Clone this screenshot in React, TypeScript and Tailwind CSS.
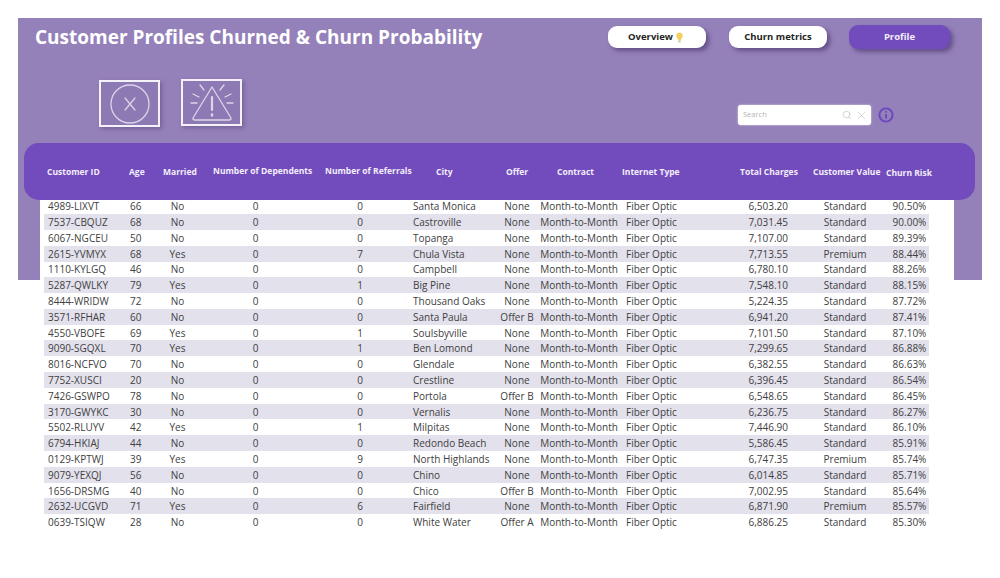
import { Search, X } from "lucide-react";

type Row = [string, number, string, number, number, string, string, string, string, string];

const rows: Row[] = [
  ["4989-LIXVT", 66, "No", 0, 0, "Santa Monica", "None", "6,503.20", "Standard", "90.50%"],
  ["7537-CBQUZ", 68, "No", 0, 0, "Castroville", "None", "7,031.45", "Standard", "90.00%"],
  ["6067-NGCEU", 50, "No", 0, 0, "Topanga", "None", "7,107.00", "Standard", "89.39%"],
  ["2615-YVMYX", 68, "Yes", 0, 7, "Chula Vista", "None", "7,713.55", "Premium", "88.44%"],
  ["1110-KYLGQ", 46, "No", 0, 0, "Campbell", "None", "6,780.10", "Standard", "88.26%"],
  ["5287-QWLKY", 79, "Yes", 0, 1, "Big Pine", "None", "7,548.10", "Standard", "88.15%"],
  ["8444-WRIDW", 72, "No", 0, 0, "Thousand Oaks", "None", "5,224.35", "Standard", "87.72%"],
  ["3571-RFHAR", 60, "No", 0, 0, "Santa Paula", "Offer B", "6,941.20", "Standard", "87.41%"],
  ["4550-VBOFE", 69, "Yes", 0, 1, "Soulsbyville", "None", "7,101.50", "Standard", "87.10%"],
  ["9090-SGQXL", 70, "Yes", 0, 1, "Ben Lomond", "None", "7,299.65", "Standard", "86.88%"],
  ["8016-NCFVO", 70, "No", 0, 0, "Glendale", "None", "6,382.55", "Standard", "86.63%"],
  ["7752-XUSCI", 20, "No", 0, 0, "Crestline", "None", "6,396.45", "Standard", "86.54%"],
  ["7426-GSWPO", 78, "No", 0, 0, "Portola", "Offer B", "6,548.65", "Standard", "86.45%"],
  ["3170-GWYKC", 30, "No", 0, 0, "Vernalis", "None", "6,236.75", "Standard", "86.27%"],
  ["5502-RLUYV", 42, "Yes", 0, 1, "Milpitas", "None", "7,446.90", "Standard", "86.10%"],
  ["6794-HKIAJ", 44, "No", 0, 0, "Redondo Beach", "None", "5,586.45", "Standard", "85.91%"],
  ["0129-KPTWJ", 39, "Yes", 0, 9, "North Highlands", "None", "6,747.35", "Premium", "85.74%"],
  ["9079-YEXQJ", 56, "No", 0, 0, "Chino", "None", "6,014.85", "Standard", "85.71%"],
  ["1656-DRSMG", 40, "No", 0, 0, "Chico", "Offer B", "7,002.95", "Standard", "85.64%"],
  ["2632-UCGVD", 71, "Yes", 0, 6, "Fairfield", "None", "6,871.90", "Premium", "85.57%"],
  ["0639-TSIQW", 28, "No", 0, 0, "White Water", "Offer A", "6,886.25", "Standard", "85.30%"],
];

const rowGrid = "grid grid-cols-[82px_38px_27px_129px_80px_97px_40px_84px_99px_80px_90px_39px] items-center w-[885px] h-[15.8px]";
const headGrid = "grid grid-cols-[82px_34px_50px_112px_111px_70px_51px_65px_118px_73px_73px_46px] items-center ml-[23px] pt-[1px] h-full";

export default function App() {
  return (
    <div className="w-[1000px] h-[578px] bg-white overflow-hidden pt-[18px] font-['Open_Sans',sans-serif]">
      {/* fondo morado con titulo, iconos y cabecera */}
      <div className="mx-[18px] h-[262px] bg-[#9581b9] pt-[7px] flex flex-col">
        <div className="flex items-center h-[24px] pl-[17px] pr-[32px]">
          <h1 className="text-[19px] font-bold text-white leading-none whitespace-nowrap">
            Customer Profiles Churned &amp; Churn Probability
          </h1>
          <button className="ml-auto w-[98px] h-[22px] rounded-[9px] bg-white text-[9.5px] font-bold text-[#252423] flex items-center justify-center gap-[2px] pr-[2px] shadow-[3px_3px_4px_rgba(60,40,100,0.55)]">
            Overview
            <svg width="9" height="11" viewBox="0 0 9 11">
              <path d="M4.5 0.5a3.4 3.4 0 0 0-2 6.1l0.6 1.5h2.8l0.6-1.5a3.4 3.4 0 0 0-2-6.1z" fill="#f5d060" />
              <rect x="3.3" y="8.4" width="2.4" height="1.8" fill="#c9b98a" />
            </svg>
          </button>
          <button className="ml-[23px] w-[98px] h-[22px] rounded-[9px] bg-white text-[9.5px] font-bold text-[#252423] shadow-[3px_3px_4px_rgba(60,40,100,0.55)]">
            Churn metrics
          </button>
          <button className="ml-[22px] w-[101px] h-[24px] rounded-[9px] bg-[#724bbd] text-[9.5px] font-bold text-[#f2eefa] shadow-[3px_3px_4px_rgba(60,40,100,0.55)]">
            Profile
          </button>
        </div>

        <div className="flex items-start mt-[30px] h-[48px] pl-[81px] pr-[88px]">
          <div className="mt-[1px] w-[61px] h-[47px] border-2 border-[#f4f2f8] bg-[#8d79b3] shadow-[2px_2px_4px_rgba(60,40,100,0.35)] flex items-center justify-center">
            <svg width="44" height="44" viewBox="0 0 44 44" fill="none" stroke="#ddd5ea" strokeLinecap="round">
              <circle cx="22" cy="22" r="19" strokeWidth="1.3" />
              <path d="M17 16 L27 28 M27 16 L17 28" strokeWidth="1.2" />
            </svg>
          </div>
          <div className="ml-[21px] w-[61px] h-[47px] border-2 border-[#f4f2f8] bg-[#8d79b3] shadow-[2px_2px_4px_rgba(60,40,100,0.35)] flex items-center justify-center">
            <svg width="44" height="42" viewBox="0 0 44 42" fill="none" stroke="#ddd5ea" strokeLinecap="round" strokeLinejoin="round">
              <path d="M22 5 L41 36 Q41.5 38 39 38 H5 Q2.5 38 3 36 Z" strokeWidth="1.3" />
              <path d="M22 15 V28" strokeWidth="2.2" />
              <path d="M22 32.5 V33.5" strokeWidth="2.4" />
              <path d="M10 3 L14 8 M34 3 L30 8 M3 12 L9 15 M41 12 L35 15 M1 21 H7 M43 21 H37" strokeWidth="1.3" />
            </svg>
          </div>
          <div className="ml-auto mt-[26px] flex items-center gap-[7px]">
            <div className="w-[133px] h-[20px] rounded-[3px] bg-white flex items-center pl-[5px] pr-[3px] shadow-[0_0_2px_rgba(255,255,255,0.8)]">
              <span className="text-[7.5px] text-[#b5b5b5]">Search</span>
              <Search className="ml-auto w-[10px] h-[10px] text-[#a8a8a8]" strokeWidth={1.2} />
              <X className="ml-[3px] w-[13px] h-[13px] text-[#b5b5b5]" strokeWidth={1} />
            </div>
            <svg width="16" height="16" viewBox="0 0 16 16" fill="none" stroke="#6a46bf">
              <circle cx="8" cy="8" r="6.6" strokeWidth="1.9" />
              <path d="M8 7 V11.5" strokeWidth="1.8" />
              <path d="M8 4.3 V5.5" strokeWidth="1.8" />
            </svg>
          </div>
        </div>

        <div className="relative z-10 mt-[16px] ml-[6px] mr-[7px] h-[57px] rounded-[15px] bg-[#724bbd] text-[8.5px] font-bold text-[#f2eefa]">
          <div className={headGrid}>
            <span className="whitespace-nowrap">Customer ID</span>
            <span className="whitespace-nowrap">Age</span>
            <span className="whitespace-nowrap">Married</span>
            <span className="whitespace-nowrap -mt-[2px]">Number of Dependents</span>
            <span className="whitespace-nowrap -mt-[1px]">Number of Referrals</span>
            <span className="whitespace-nowrap">City</span>
            <span className="whitespace-nowrap">Offer</span>
            <span className="whitespace-nowrap">Contract</span>
            <span className="whitespace-nowrap">Internet Type</span>
            <span className="whitespace-nowrap">Total Charges</span>
            <span className="whitespace-nowrap mt-[1px]">Customer Value</span>
            <span className="whitespace-nowrap mt-[2px]">Churn Risk</span>
          </div>
        </div>
      </div>

      {/* tabla */}
      <div className="-mt-[81.7px] ml-[40px] w-[914px] h-[342px] bg-white pl-[4px] relative">
        <div className="text-[10px] text-[#404040] leading-none">
          {rows.map((r, i) => (
            <div key={r[0]} className={`${rowGrid} ${i % 2 === 1 ? "bg-[#e3e1ec]" : ""}`}>
              <span className="pl-[4px] whitespace-nowrap">{r[0]}</span>
              <span className="pl-[4px]">{r[1]}</span>
              <span className="text-center">{r[2]}</span>
              <span className="text-center">{r[3]}</span>
              <span className="text-center">{r[4]}</span>
              <span className="pl-[13px] whitespace-nowrap">{r[5]}</span>
              <span className="text-center whitespace-nowrap">{r[6]}</span>
              <span className="text-center whitespace-nowrap">Month-to-Month</span>
              <span className="pl-[5px] whitespace-nowrap">Fiber Optic</span>
              <span className="text-right pr-[12px]">{r[7]}</span>
              <span className="text-center">{r[8]}</span>
              <span className="text-center">{r[9]}</span>
            </div>
          ))}
        </div>
      </div>
    </div>
  );
}
